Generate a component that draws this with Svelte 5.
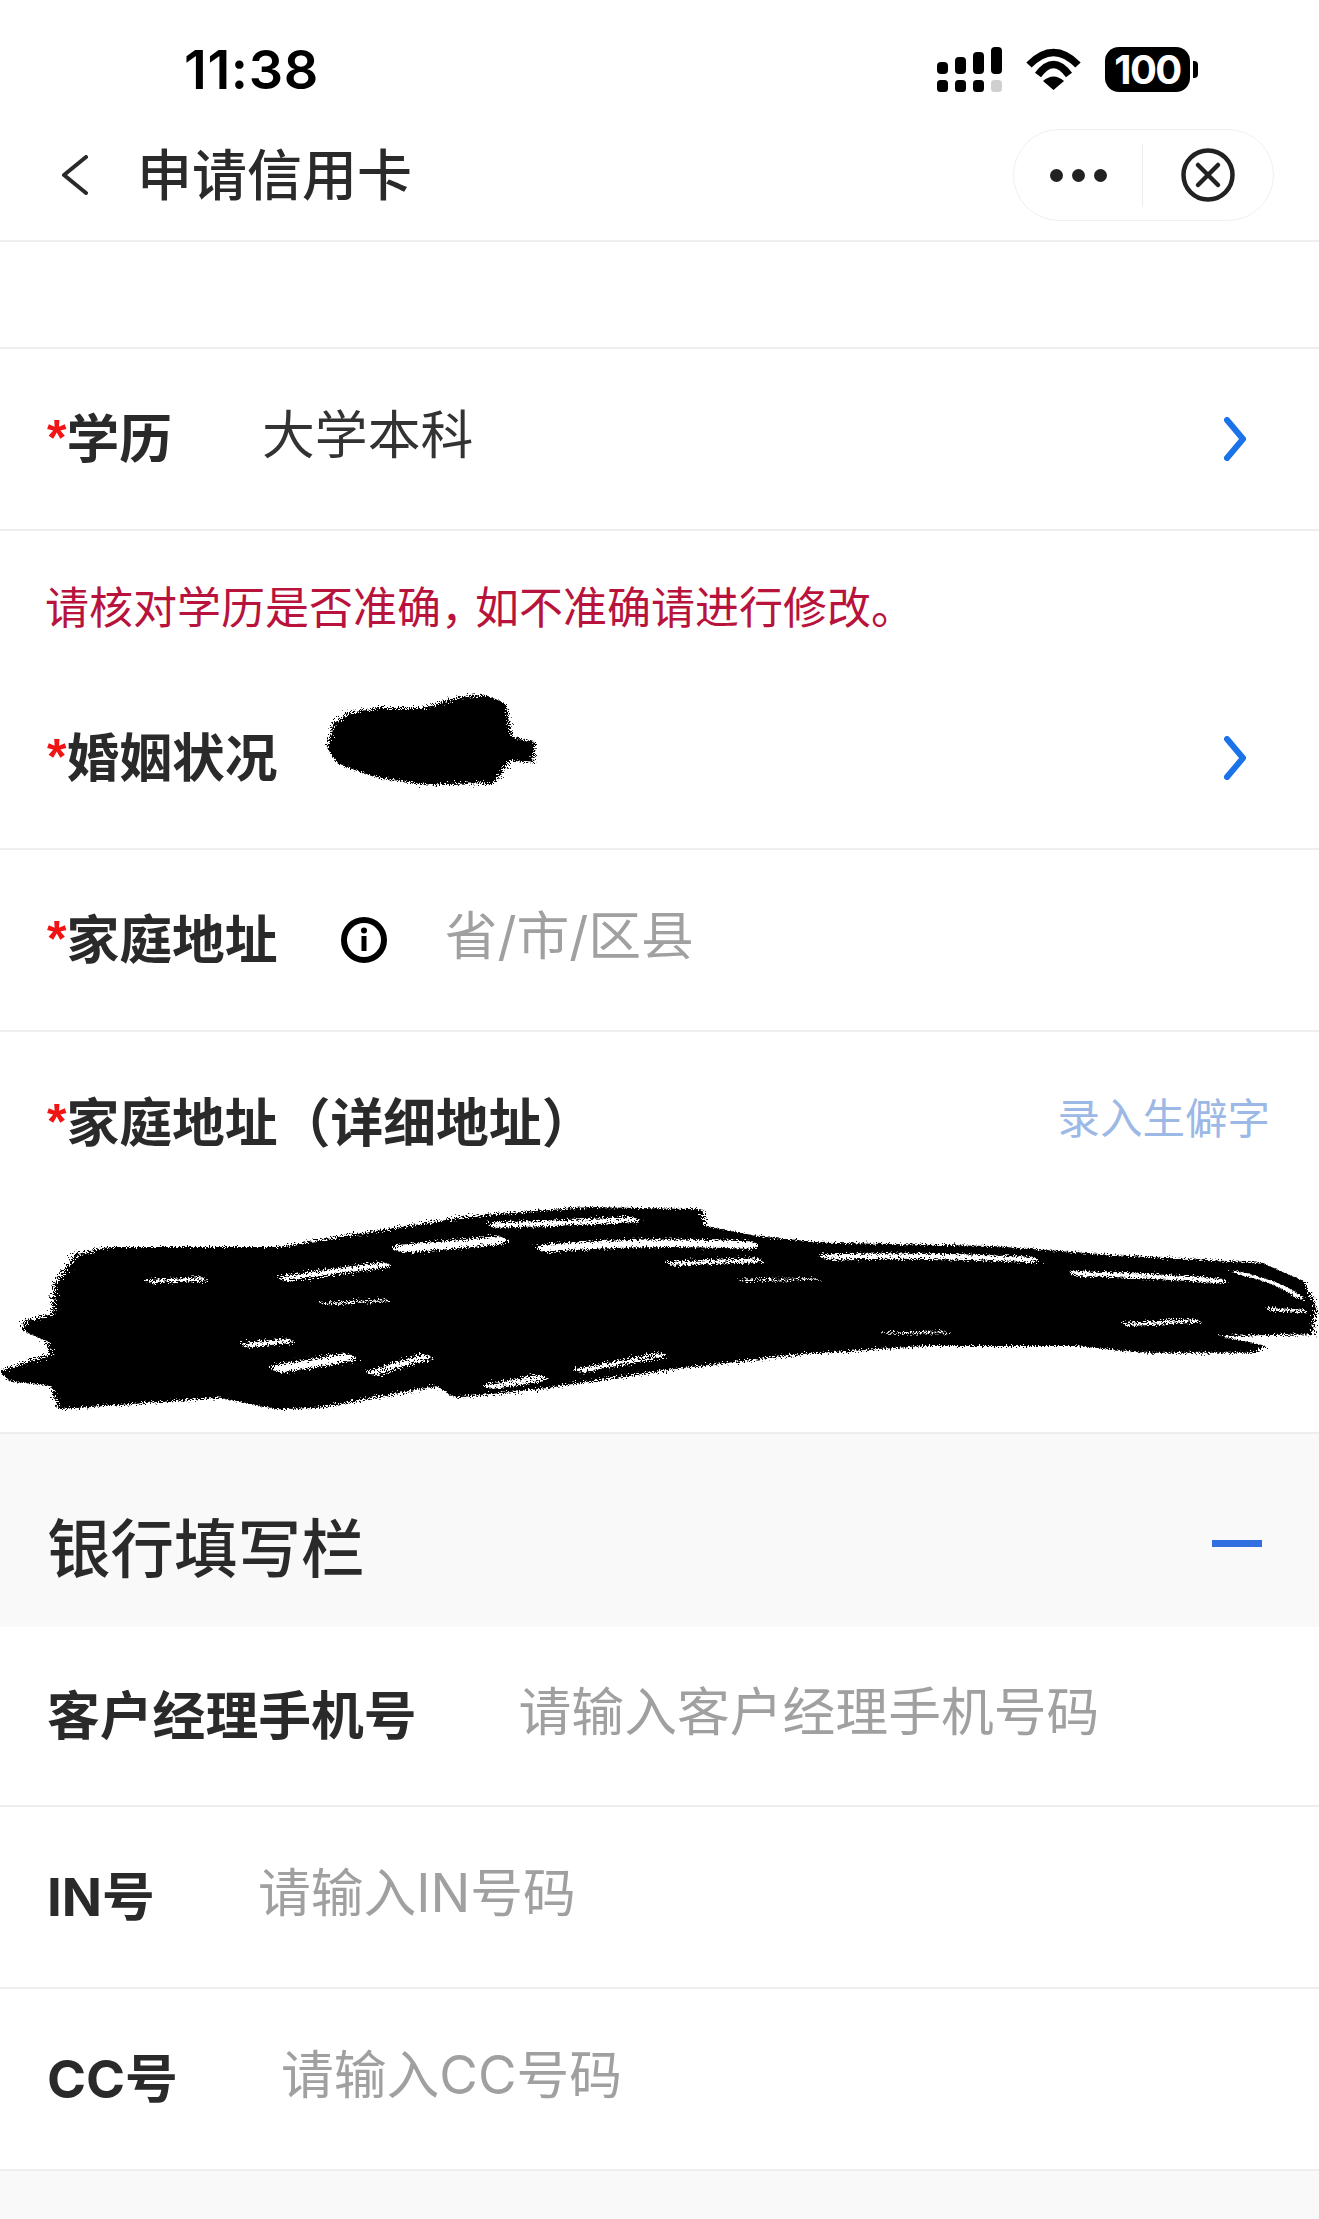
<script lang="ts">
  const bigScribble = '0,690 60,640 55,600 28,570 30,540 62,520 65,430 90,340 130,318 260,318 330,318 460,265 560,225 700,198 835,205 838,255 900,285 980,305 1180,315 1340,345 1500,365 1550,420 1565,500 1560,580 1450,585 1505,615 1490,635 1360,635 1280,615 1100,615 950,640 800,685 640,745 540,770 520,735 380,800 330,805 260,770 70,805 60,735 10,720';
  const gaps = [
    { d: 'M480 322 Q540 312 590 298', w: 24 },
    { d: 'M650 322 Q760 298 890 312', w: 22 },
    { d: 'M590 252 Q680 246 750 236', w: 16 },
    { d: 'M985 348 Q1100 340 1225 356', w: 16 },
    { d: 'M1280 398 Q1360 402 1450 420', w: 14 },
    { d: 'M340 412 Q400 390 455 372', w: 16 },
    { d: 'M335 682 Q380 665 410 650', w: 24 },
    { d: 'M445 695 Q480 665 505 648', w: 14 },
    { d: 'M690 688 Q740 665 785 642', w: 12 },
    { d: 'M585 735 Q620 725 640 710', w: 16 },
    { d: 'M800 368 Q850 362 900 358', w: 12 },
    { d: 'M1470 395 Q1520 420 1545 470', w: 8 },
    { d: 'M180 422 L240 414', w: 10 },
    { d: 'M295 612 L340 600', w: 14 },
    { d: 'M385 488 L460 478', w: 5 },
    { d: 'M880 418 L970 414', w: 5 },
    { d: 'M1050 576 L1125 574', w: 5 },
    { d: 'M1340 550 L1420 540', w: 10 },
    { d: 'M1510 505 L1550 510', w: 8 },
  ];
</script>

<div class="page" lang="zh-CN">
  <div class="status">
    <span class="time">11:38</span>
    <div class="status-icons">
      <svg width="65" height="45" viewBox="0 0 65 45" aria-hidden="true">
        <rect x="0" y="15" width="11" height="12" rx="4" />
        <rect x="18" y="10" width="11" height="17" rx="4" />
        <rect x="36" y="5" width="11" height="22" rx="4" />
        <rect x="54" y="0" width="11" height="27" rx="4" />
        <rect x="0" y="33" width="11" height="12" rx="3.5" />
        <rect x="18" y="33" width="11" height="12" rx="3.5" />
        <rect x="36" y="33" width="11" height="12" rx="3.5" />
        <rect x="54" y="33" width="11" height="12" rx="3.5" fill="#cfcfcf" />
      </svg>
      <svg width="57" height="42" viewBox="0 0 57 42" aria-hidden="true">
        <path d="M4 17Q28.5 -8 53 17M13 27Q28.5 6 44 27" fill="none" stroke="#000" stroke-width="7.5" />
        <path d="M28.5 42L18 33Q28.5 24 39 33Z" />
      </svg>
      <div class="battery"><span>100</span><i></i></div>
    </div>
  </div>

  <nav class="nav">
    <svg class="back" width="27" height="40" viewBox="0 0 27 40" aria-hidden="true">
      <path d="M25 2L3 20L25 38" fill="none" stroke="#2a2a2a" stroke-width="4" stroke-linecap="round" stroke-linejoin="round" />
    </svg>
    <h1>申请信用卡</h1>
    <div class="capsule">
      <div class="cell more"><b></b><b></b><b></b></div>
      <div class="cell close">
        <svg width="54" height="54" viewBox="0 0 54 54" aria-hidden="true">
          <circle cx="27" cy="27" r="24.5" fill="none" stroke="#222" stroke-width="4.5" />
          <path d="M17 17L37 37M37 17L17 37" fill="none" stroke="#222" stroke-width="4.5" stroke-linecap="round" />
        </svg>
      </div>
    </div>
  </nav>

  <div class="blank"></div>

  <div class="row">
    <span class="label"><em>*</em>学历</span>
    <span class="value edu">大学本科</span>
    <svg class="more-arrow" width="22" height="44" viewBox="0 0 22 44" aria-hidden="true">
      <path d="M3 3L19 22L3 41" fill="none" stroke="#1a73e8" stroke-width="6" stroke-linecap="round" stroke-linejoin="round" />
    </svg>
  </div>

  <p class="note">请核对学历是否准确<span class="tight">，</span>如不准确请进行修改。</p>

  <div class="row">
    <span class="label"><em>*</em>婚姻状况</span>
    <svg class="blot" width="218" height="97" viewBox="730 395 470 285" preserveAspectRatio="none" aria-hidden="true">
      <defs>
        <filter id="rough" x="-5%" y="-10%" width="110%" height="120%">
          <feTurbulence type="fractalNoise" baseFrequency="0.45" numOctaves="3" seed="4" />
          <feDisplacementMap in="SourceGraphic" scale="34" />
        </filter>
      </defs>
      <polygon filter="url(#rough)" points="740,560 755,490 790,460 850,445 950,445 1020,415 1080,405 1125,430 1140,530 1190,545 1185,605 1135,600 1100,665 950,670 850,650 765,610" />
    </svg>
    <svg class="more-arrow" width="22" height="44" viewBox="0 0 22 44" aria-hidden="true">
      <path d="M3 3L19 22L3 41" fill="none" stroke="#1a73e8" stroke-width="6" stroke-linecap="round" stroke-linejoin="round" />
    </svg>
  </div>

  <div class="row">
    <span class="label"><em>*</em>家庭地址</span>
    <svg class="info" width="46" height="46" viewBox="0 0 46 46" aria-hidden="true">
      <circle cx="23" cy="23" r="20" fill="none" stroke="#000" stroke-width="6" />
      <circle cx="23" cy="13.5" r="3" />
      <rect x="20.5" y="19" width="5" height="15" />
    </svg>
    <span class="value hint addr">省/市/区县</span>
  </div>

  <div class="detail">
    <div class="detail-head">
      <span class="label"><em>*</em>家庭地址（详细地址）</span>
      <span class="rare">录入生僻字</span>
    </div>
    <svg class="redact" width="1319" height="205" viewBox="0 195 1568 615" preserveAspectRatio="none" aria-hidden="true">
      <defs>
        <filter id="brush" x="-2%" y="-8%" width="104%" height="116%">
          <feTurbulence type="fractalNoise" baseFrequency="0.5 0.35" numOctaves="3" seed="9" />
          <feDisplacementMap in="SourceGraphic" scale="26" />
        </filter>
      </defs>
      <g filter="url(#brush)">
        <polygon points={bigScribble} />
        <g fill="none" stroke="#fff" stroke-linecap="round">
          {#each gaps as gap}
            <path d={gap.d} stroke-width={gap.w} />
          {/each}
        </g>
      </g>
    </svg>
  </div>

  <div class="section">
    <h2>银行填写栏</h2>
    <i class="minus"></i>
  </div>

  <div class="row short">
    <span class="label">客户经理手机号</span>
    <span class="value hint mgr">请输入客户经理手机号码</span>
  </div>
  <div class="row">
    <span class="label">IN号</span>
    <span class="value hint inno">请输入IN号码</span>
  </div>
  <div class="row">
    <span class="label">CC号</span>
    <span class="value hint cc">请输入CC号码</span>
  </div>

  <div class="tail"></div>
</div>

<style>
  :global(body){margin:0;background:#fff}
  .page{width:1319px;height:2219px;overflow:hidden;background:#fff;color:#2a2a2a;font-family:"Inter","Noto Sans CJK SC",sans-serif}

  .status{display:flex;align-items:center;justify-content:space-between;box-sizing:border-box;height:110px;padding:28px 121px 0 184px}
  .time{font-size:54px;font-weight:600;color:#000;letter-spacing:.6px}
  .status-icons{display:flex;align-items:center;gap:23px}
  .battery{position:relative;display:flex;align-items:center;justify-content:center;width:85px;height:45px;margin-right:8px;border-radius:14px;background:#000;color:#fff;font-size:40px;font-weight:700;letter-spacing:-1.5px}
  .battery i{position:absolute;right:-8px;top:14px;width:5px;height:17px;border-radius:0 4px 4px 0;background:#000}

  .nav{display:flex;align-items:center;box-sizing:border-box;height:132px;padding:0 45px 0 61px;border-bottom:2px solid #eeeef1}
  .nav h1{margin:0 0 8px 49px;font-size:55px;font-weight:500;color:#2a2a2a}
  .capsule{display:flex;align-items:center;box-sizing:border-box;width:261px;height:92px;margin-left:auto;border:1.5px solid #f0f0f0;border-radius:46px}
  .cell{display:flex;align-items:center;justify-content:center}
  .more{gap:9px;width:128px;height:63px;border-right:1.5px solid #ececec}
  .more b{width:13px;height:13px;border-radius:50%;background:#222}
  .close{flex:1}

  .blank{height:105px;border-bottom:2px solid #eeeeee}

  .row{display:flex;align-items:center;box-sizing:border-box;height:182px;padding:0 73px 0 47px;border-bottom:2px solid #eeeeee}
  .row.short{height:180px}
  .label{font-size:52.8px;font-weight:700;color:#2a2a2a;white-space:nowrap}
  .row .label{margin-bottom:8px}
  .label em{font-family:"Liberation Sans",sans-serif;font-style:normal;color:#f01414;font-size:50px;vertical-align:3px}
  .value{font-size:52.8px;color:#333;white-space:nowrap;margin-bottom:17px}
  .hint{color:#a0a0a0}
  .edu{margin-left:90px}
  .addr{margin-left:58px}
  .mgr{margin-left:102px}
  .inno{margin-left:103px}
  .cc{margin-left:103px}
  .more-arrow{margin-left:auto}
  .info{margin-left:63px}
  .blot{margin:0 0 38px 44px}

  .note{box-sizing:border-box;height:137px;margin:0;padding:55px 45px 0;font-size:44px;line-height:44px;color:#b8133c}
  .tight{letter-spacing:-10px}

  .detail{position:relative;box-sizing:border-box;height:402px;padding:49px 49px 0 47px;border-bottom:2px solid #eeeeee}
  .detail-head{display:flex;align-items:center;justify-content:space-between}
  .rare{margin-bottom:8px;font-size:42.5px;color:#9cb8e6}
  .redact{position:absolute;left:0;top:174px}

  .section{display:flex;align-items:center;justify-content:space-between;box-sizing:border-box;height:193px;padding:26px 57px 0 47px;background:#f9f9f9}
  .section h2{margin:0;font-size:63.5px;font-weight:500;color:#2a2a2a}
  .minus{width:50px;height:7px;background:#2f6fdf}

  .tail{height:60px;background:#f9f9f9}
</style>
